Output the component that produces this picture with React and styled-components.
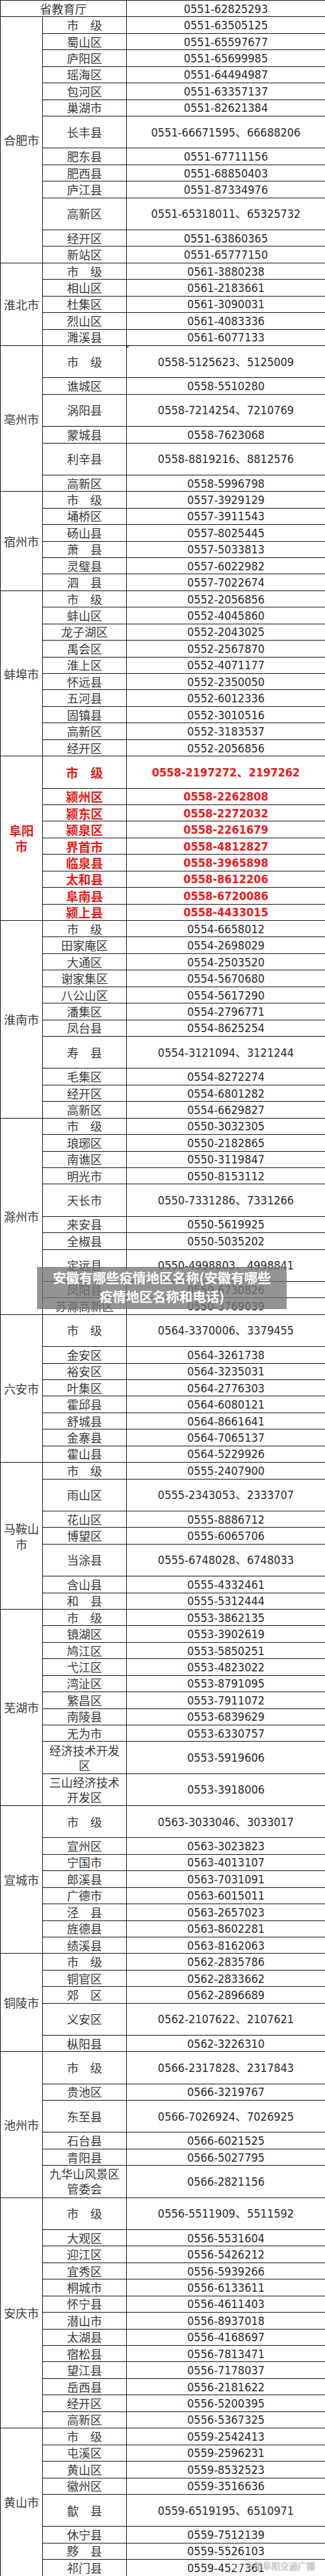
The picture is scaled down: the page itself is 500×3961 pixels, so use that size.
import styled, { createGlobalStyle } from "styled-components";

const GlobalStyle = createGlobalStyle`
  html, body {
    margin: 0;
    padding: 0;
    background: #fff;
  }
`;

const Sheet = styled.div`
  position: relative;
  width: 500px;
  background: #fff;
`;

const Table = styled.table`
  width: 500px;
  table-layout: fixed;
  border-collapse: collapse;
  color: #2f2f2f;
`;

const Row = styled.tr`
  height: ${(p) => (p.$tall ? "49.3px" : "25.45px")};
`;

const Cell = styled.td`
  border: 1px solid #111;
  padding: 0 4px;
  text-align: center;
  vertical-align: middle;
  overflow: hidden;
`;

const CityCell = styled(Cell)`
  font-family: "Noto Sans CJK SC", sans-serif;
  font-size: ${(p) => (p.$hot ? "19px" : "18px")};
  font-weight: ${(p) => (p.$hot ? 700 : 400)};
  color: ${(p) => (p.$hot ? "#ec1b1b" : "#3a3a3a")};
  line-height: 24px;
`;

const NameCell = styled(Cell)`
  font-family: "Noto Sans CJK SC", sans-serif;
  font-size: ${(p) => (p.$hot ? "19px" : "18px")};
  font-weight: ${(p) => (p.$hot ? 700 : 400)};
  color: ${(p) => (p.$hot ? "#ec1b1b" : "#3a3a3a")};
  line-height: 23px;
`;

const PhoneCell = styled(Cell)`
  position: relative;
  font-family: "DejaVu Sans Condensed", "Liberation Sans", "Noto Sans CJK SC", sans-serif;
  font-size: 18px;
  font-weight: ${(p) => (p.$hot ? 700 : 400)};
  color: ${(p) => (p.$hot ? "#ec1b1b" : "#2b2b2b")};
  line-height: 23px;
  white-space: nowrap;

  &::before {
    content: "";
    display: ${(p) => (p.$note ? "block" : "none")};
    position: absolute;
    left: 0;
    top: 0;
    border-top: 4px solid #2a9a2a;
    border-right: 4px solid transparent;
  }
`;

const Caption = styled.div`
  position: absolute;
  left: 57px;
  top: 1948px;
  width: 384px;
  height: 65px;
  box-sizing: border-box;
  padding: 1.5px 16px 0;
  background: rgba(118, 118, 118, 0.78);
  color: #fff;
  font-family: "Noto Sans CJK SC", sans-serif;
  font-size: 20.5px;
  font-weight: 700;
  line-height: 29px;
  text-align: center;
`;

const Watermark = styled.div`
  position: absolute;
  left: 356px;
  top: 3936px;
  display: flex;
  align-items: center;
  gap: 3px;
  font-family: "Noto Sans CJK SC", sans-serif;
  font-size: 13.5px;
  line-height: 18px;
  color: rgba(255, 255, 255, 0.72);
  text-shadow: 0 0 1px rgba(0, 0, 0, 0.45), 0 0 2px rgba(0, 0, 0, 0.25);

  svg {
    width: 18px;
    height: 16px;
    opacity: 0.75;
  }
`;

const groups = [
  {
    city: "合肥市",
    rows: [
      ["市　级", "0551-63505125"],
      ["蜀山区", "0551-65597677"],
      ["庐阳区", "0551-65699985"],
      ["瑶海区", "0551-64494987"],
      ["包河区", "0551-63357137"],
      ["巢湖市", "0551-82621384"],
      ["长丰县", "0551-66671595、66688206"],
      ["肥东县", "0551-67711156"],
      ["肥西县", "0551-68850403"],
      ["庐江县", "0551-87334976"],
      ["高新区", "0551-65318011、65325732"],
      ["经开区", "0551-63860365"],
      ["新站区", "0551-65777150"],
    ],
  },
  {
    city: "淮北市",
    rows: [
      ["市　级", "0561-3880238"],
      ["相山区", "0561-2183661"],
      ["杜集区", "0561-3090031"],
      ["烈山区", "0561-4083336"],
      ["濉溪县", "0561-6077133"],
    ],
  },
  {
    city: "亳州市",
    rows: [
      ["市　级", "0558-5125623、5125009", true],
      ["谯城区", "0558-5510280"],
      ["涡阳县", "0558-7214254、7210769"],
      ["蒙城县", "0558-7623068"],
      ["利辛县", "0558-8819216、8812576"],
      ["高新区", "0558-5996798"],
    ],
  },
  {
    city: "宿州市",
    rows: [
      ["市　级", "0557-3929129"],
      ["埇桥区", "0557-3911543"],
      ["砀山县", "0557-8025445"],
      ["萧　县", "0557-5033813"],
      ["灵璧县", "0557-6022982"],
      ["泗　县", "0557-7022674"],
    ],
  },
  {
    city: "蚌埠市",
    rows: [
      ["市　级", "0552-2056856"],
      ["蚌山区", "0552-4045860"],
      ["龙子湖区", "0552-2043025"],
      ["禹会区", "0552-2567870"],
      ["淮上区", "0552-4071177"],
      ["怀远县", "0552-2350050"],
      ["五河县", "0552-6012336"],
      ["固镇县", "0552-3010516"],
      ["高新区", "0552-3183537"],
      ["经开区", "0552-2056856"],
    ],
  },
  {
    city: "阜阳市",
    hot: true,
    rows: [
      ["市　级", "0558-2197272、2197262"],
      ["颍州区", "0558-2262808"],
      ["颍东区", "0558-2272032"],
      ["颍泉区", "0558-2261679"],
      ["界首市", "0558-4812827"],
      ["临泉县", "0558-3965898"],
      ["太和县", "0558-8612206"],
      ["阜南县", "0558-6720086"],
      ["颍上县", "0558-4433015"],
    ],
  },
  {
    city: "淮南市",
    rows: [
      ["市　级", "0554-6658012"],
      ["田家庵区", "0554-2698029"],
      ["大通区", "0554-2503520"],
      ["谢家集区", "0554-5670680"],
      ["八公山区", "0554-5617290"],
      ["潘集区", "0554-2796771"],
      ["凤台县", "0554-8625254"],
      ["寿　县", "0554-3121094、3121244"],
      ["毛集区", "0554-8272274"],
      ["经开区", "0554-6801282"],
      ["高新区", "0554-6629827"],
    ],
  },
  {
    city: "滁州市",
    rows: [
      ["市　级", "0550-3032305"],
      ["琅琊区", "0550-2182865"],
      ["南谯区", "0550-3119847"],
      ["明光市", "0550-8153112"],
      ["天长市", "0550-7331286、7331266"],
      ["来安县", "0550-5619925"],
      ["全椒县", "0550-5035202"],
      ["定远县", "0550-4998803、4998841"],
      ["凤阳县", "0550-6730826"],
      ["苏滁高新区", "0550-3769039"],
    ],
  },
  {
    city: "六安市",
    rows: [
      ["市　级", "0564-3370006、3379455"],
      ["金安区", "0564-3261738"],
      ["裕安区", "0564-3235031"],
      ["叶集区", "0564-2776303"],
      ["霍邱县", "0564-6080121"],
      ["舒城县", "0564-8661641"],
      ["金寨县", "0564-7065137"],
      ["霍山县", "0564-5229926"],
    ],
  },
  {
    city: "马鞍山市",
    rows: [
      ["市　级", "0555-2407900"],
      ["雨山区", "0555-2343053、2333707"],
      ["花山区", "0555-8886712"],
      ["博望区", "0555-6065706"],
      ["当涂县", "0555-6748028、6748033"],
      ["含山县", "0555-4332461"],
      ["和　县", "0555-5312444"],
    ],
  },
  {
    city: "芜湖市",
    rows: [
      ["市　级", "0553-3862135"],
      ["镜湖区", "0553-3902619"],
      ["鸠江区", "0553-5850251"],
      ["弋江区", "0553-4823022"],
      ["湾沚区", "0553-8791095"],
      ["繁昌区", "0553-7911072"],
      ["南陵县", "0553-6839629"],
      ["无为市", "0553-6330757"],
      ["经济技术开发区", "0553-5919606"],
      ["三山经济技术开发区", "0553-3918006"],
    ],
  },
  {
    city: "宣城市",
    rows: [
      ["市　级", "0563-3033046、3033017"],
      ["宣州区", "0563-3023823"],
      ["宁国市", "0563-4013107"],
      ["郎溪县", "0563-7031091"],
      ["广德市", "0563-6015011"],
      ["泾　县", "0563-2657023"],
      ["旌德县", "0563-8602281"],
      ["绩溪县", "0563-8162063"],
    ],
  },
  {
    city: "铜陵市",
    rows: [
      ["市　级", "0562-2835786"],
      ["铜官区", "0562-2833662"],
      ["郊　区", "0562-2896689"],
      ["义安区", "0562-2107622、2107621"],
      ["枞阳县", "0562-3226310"],
    ],
  },
  {
    city: "池州市",
    rows: [
      ["市　级", "0566-2317828、2317843"],
      ["贵池区", "0566-3219767"],
      ["东至县", "0566-7026924、7026925"],
      ["石台县", "0566-6021525"],
      ["青阳县", "0566-5027795"],
      ["九华山风景区管委会", "0566-2821156"],
    ],
  },
  {
    city: "安庆市",
    rows: [
      ["市　级", "0556-5511909、5511592"],
      ["大观区", "0556-5531604"],
      ["迎江区", "0556-5426212"],
      ["宜秀区", "0556-5939266"],
      ["桐城市", "0556-6133611"],
      ["怀宁县", "0556-4611403"],
      ["潜山市", "0556-8937018"],
      ["太湖县", "0556-4168697"],
      ["宿松县", "0556-7813471"],
      ["望江县", "0556-7178037"],
      ["岳西县", "0556-2181622"],
      ["经开区", "0556-5200395"],
      ["高新区", "0556-5367325"],
    ],
  },
  {
    city: "黄山市",
    rows: [
      ["市　级", "0559-2542413"],
      ["屯溪区", "0559-2596231"],
      ["黄山区", "0559-8532523"],
      ["徽州区", "0559-3516636"],
      ["歙　县", "0559-6519195、6510971"],
      ["休宁县", "0559-7512139"],
      ["黟　县", "0559-5526103"],
      ["祁门县", "0559-4527361"],
    ],
  },
];

function WeiboMark() {
  return (
    <svg viewBox="0 0 18 16" fill="none">
      <ellipse cx="8" cy="10" rx="7" ry="5" stroke="#fff" strokeWidth="1.4" />
      <ellipse cx="7.5" cy="10.5" rx="2.6" ry="2" stroke="#fff" strokeWidth="1.2" />
      <path d="M12 2.5a4 4 0 0 1 4 4" stroke="#fff" strokeWidth="1.3" strokeLinecap="round" />
      <path d="M12 5a1.6 1.6 0 0 1 1.6 1.6" stroke="#fff" strokeWidth="1.2" strokeLinecap="round" />
    </svg>
  );
}

export default function App() {
  return (
    <Sheet>
      <GlobalStyle />
      <Table>
        <colgroup>
          <col style={{ width: 65 }} />
          <col style={{ width: 129 }} />
          <col style={{ width: 306 }} />
        </colgroup>
        <tbody>
          <Row>
            <NameCell colSpan={2}>省教育厅</NameCell>
            <PhoneCell>0551-62825293</PhoneCell>
          </Row>
          {groups.map((g) =>
            g.rows.map(([name, phone, note], i) => {
              const tall = phone.includes("、") || name.length > 6;
              return (
                <Row key={g.city + name} $tall={tall}>
                  {i === 0 && (
                    <CityCell rowSpan={g.rows.length} $hot={g.hot}>
                      {g.city}
                    </CityCell>
                  )}
                  <NameCell $hot={g.hot}>{name}</NameCell>
                  <PhoneCell $hot={g.hot} $note={note}>
                    {phone}
                  </PhoneCell>
                </Row>
              );
            })
          )}
        </tbody>
      </Table>

      <Caption>安徽有哪些疫情地区名称(安徽有哪些疫情地区名称和电话)</Caption>

      <Watermark>
        <WeiboMark />
        <span>安徽阜阳交通广播</span>
      </Watermark>
    </Sheet>
  );
}
